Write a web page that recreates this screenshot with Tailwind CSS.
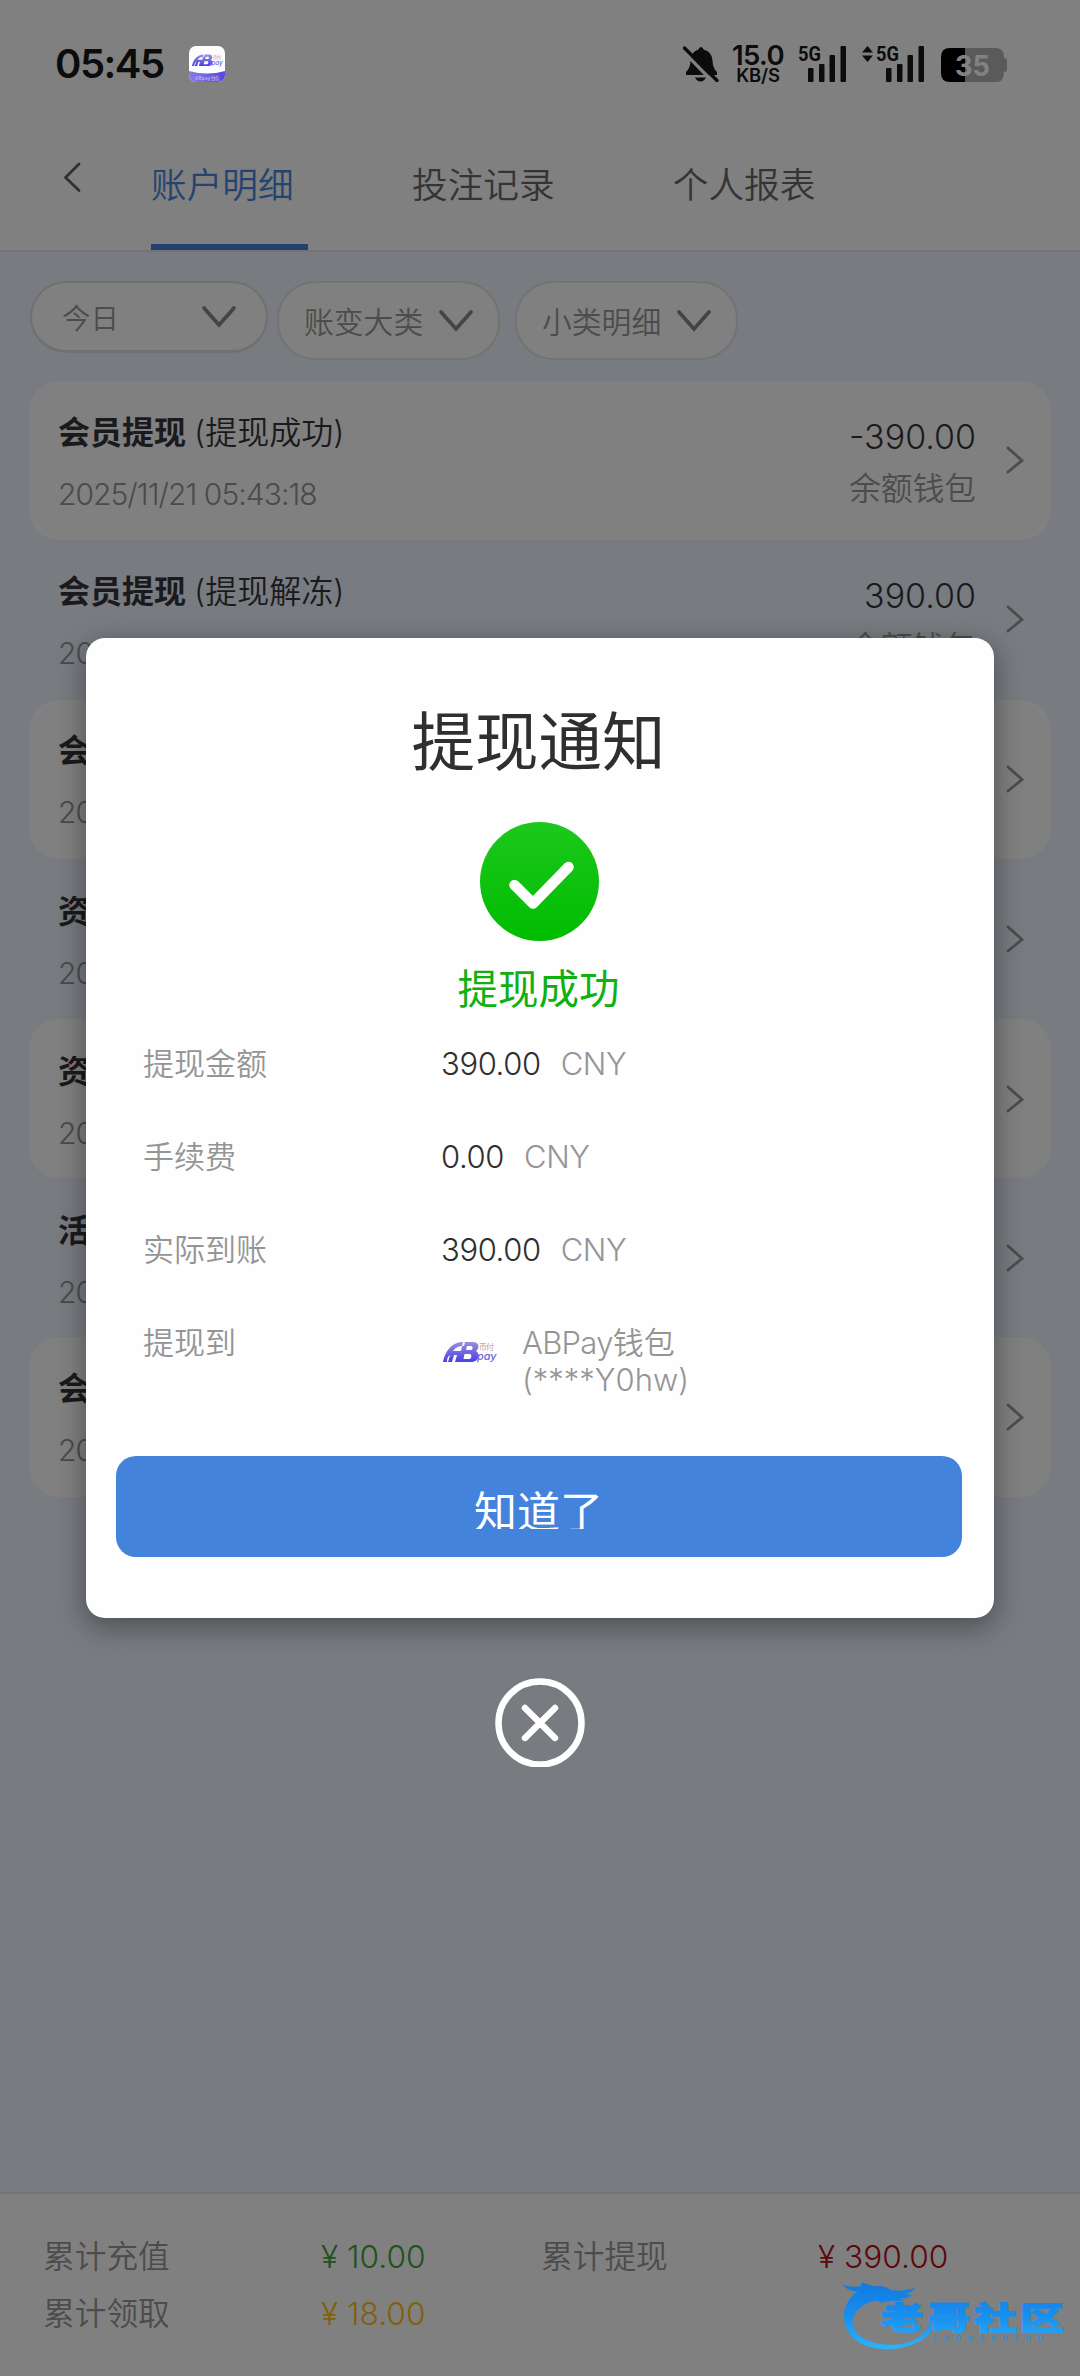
<!DOCTYPE html>
<html lang="zh-CN">
<head>
<meta charset="utf-8">
<title>账户明细</title>
<script src="https://cdn.jsdelivr.net/npm/@tailwindcss/browser@4"></script>
</head>
<body class="relative w-[1080px] h-[2376px] overflow-hidden bg-[#787b80] font-['Inter','Noto_Sans_CJK_SC',sans-serif] text-[#1a1a1c] whitespace-nowrap">
<div class="flex h-[2376px] flex-col">
  <header class="h-[250px] shrink-0 bg-[#808080]">
    <!-- status bar -->
    <div class="flex h-[128px] items-center pl-[55px] text-[#0c0c0c]">
      <span class="w-[134px] text-[40px] leading-[40px] font-semibold tracking-[-1.5px]">05:45</span>
      <svg class="h-[36px] w-[36px]" viewBox="0 0 36 36">
        <defs>
          <linearGradient id="ab" x1="0" y1="0" x2="0" y2="1"><stop offset="0" stop-color="#9a90dc"/><stop offset="1" stop-color="#4a40e4"/></linearGradient>
          <linearGradient id="pu" x1="0" x2="1"><stop offset="0" stop-color="#8f7be0"/><stop offset="1" stop-color="#5548dc"/></linearGradient>
          <clipPath id="rc"><rect width="36" height="36" rx="7"/></clipPath>
          <symbol id="logo" viewBox="0 0 54 21">
            <path d="M0 20C2 9 9 1 18 0h4l-1 4c-6 0-9 2-11 5h8l2-9h10c6 0 7 6 3 9c4 2 3 11-4 11H12l2-7h-3l-2 7H5l2-7c-2 1-3 3-3 7zM24 4l-1 4h5c2 0 2-4 0-4zM21.500 12l-1 5h6c2 0 3-5 0-5z" fill="url(#ab)" fill-rule="evenodd"/>
            <text x="34" y="18" font-family="Inter" font-size="11" font-style="italic" font-weight="500" fill="#6a62e4" textLength="19.500" lengthAdjust="spacingAndGlyphs">pay</text>
            <text x="36" y="8" font-family="Noto Sans CJK SC" font-size="8" fill="#c88aa4" textLength="15">币付</text>
          </symbol>
        </defs>
        <g clip-path="url(#rc)"><rect width="36" height="36" fill="#fdfcff"/><path d="M0 25q18 5 36 0v11H0z" fill="url(#pu)"/></g>
        <use href="#logo" x="3" y="8" width="31" height="13"/>
        <text x="6" y="33.500" font-family="Inter" font-size="4.500" fill="#d3ccff" textLength="24">ABpay钱包</text>
      </svg>
      <svg class="ml-[458px] h-[36px] w-[36px] shrink-0" viewBox="0 0 36 36" fill="#0c0c0c">
        <path d="M18 1q2 0 2.500 2.500Q29 6 29.500 14q0 8 4.500 12v3H3v-3q4.500-4 4.500-12Q8 6 15.500 3.500Q16 1 18 1zM12 31.500h11q-2 4-5.500 4t-5.500-4z"/>
        <path d="M-1 4L31 37" stroke="#808080" stroke-width="3.500"/>
        <path d="M1.500 2L34 34.500" stroke="#0c0c0c" stroke-width="3.400" stroke-linecap="round"/>
      </svg>
      <div class="ml-[11px] w-[56px] shrink-0 text-center">
        <div class="text-[27.5px] leading-[20px] font-semibold tracking-[-0.6px]">15.0</div>
        <div class="mt-[2px] text-[18.500px] leading-[16px] font-semibold tracking-[-0.2px]">KB/S</div>
      </div>
      <svg class="ml-[12px] h-[36px] w-[49px] shrink-0 overflow-visible" viewBox="0 0 49 36" fill="#0c0c0c"><rect x="10" y="22" width="5.500" height="14" rx="1"/><rect x="21" y="18" width="5.500" height="18" rx="1"/><rect x="31.500" y="9" width="5.500" height="27" rx="1"/><rect x="42.500" width="5.500" height="36" rx="1"/><text x="0" y="14.500" font-family="Roboto" font-weight="700" font-size="21" textLength="23" lengthAdjust="spacingAndGlyphs">5G</text></svg>
      <svg class="mb-[20px] ml-[15px] h-[16px] w-[11px] shrink-0" viewBox="0 0 11 16" fill="#0c0c0c"><path d="M5.500 0L11 6.500H0zM5.500 16L11 9.500H0z"/></svg>
      <svg class="ml-[3px] h-[36px] w-[49px] shrink-0 overflow-visible" viewBox="0 0 49 36" fill="#0c0c0c"><rect x="10" y="22" width="5.500" height="14" rx="1"/><rect x="21" y="18" width="5.500" height="18" rx="1"/><rect x="31.500" y="9" width="5.500" height="27" rx="1"/><rect x="42.500" width="5.500" height="36" rx="1"/><text x="0" y="14.500" font-family="Roboto" font-weight="700" font-size="21" textLength="23" lengthAdjust="spacingAndGlyphs">5G</text></svg>
      <svg class="ml-[16px] mt-[2px] h-[34px] w-[67px] shrink-0" viewBox="0 0 67 34">
        <path d="M24 0h31q8 0 8 10q3 0 3 3v8q0 3-3 3q0 10-8 10H24z" fill="#5a5a5a"/>
        <path d="M24 0v34H9q-9 0-9-9V9q0-9 9-9z" fill="#000"/>
        <text x="14" y="27.500" font-family="Inter" font-weight="700" font-size="29" fill="#828282" textLength="35" lengthAdjust="spacingAndGlyphs">35</text>
      </svg>
    </div>
    <!-- tabs -->
    <nav class="flex h-[122px] text-[35.7px] leading-[40px] text-[#343434]">
      <svg class="ml-[62px] mt-[33px] h-[32px] w-[20px]" viewBox="0 0 20 32" fill="none" stroke="#303030" stroke-width="2.800" stroke-linecap="round" stroke-linejoin="round"><path d="M17 3L3.500 16.500L17 29.500"/></svg>
      <div class="ml-[69px] w-[157px] border-b-[6px] border-[#22416f] pt-[37px] font-[350] text-[#24446f]">账户明细</div>
      <div class="ml-[104px] pt-[37px] font-[350]">投注记录</div>
      <div class="ml-[118px] pt-[37px] font-[350]">个人报表</div>
    </nav>
  </header>
  <main class="flex-1 border-t-[2px] border-[#737378]">
    <div class="flex h-[129px] items-start pl-[30px] pt-[29px] text-[29.8px] leading-[36px] font-[350] text-[#4c4c4c]">
      <div class="flex h-[72px] w-[238px] justify-between rounded-[36px] border-2 border-b-[3px] border-[#707070] bg-[#808080] pl-[30px] pr-[29px] pt-[18px]">
        <span class="text-[28.5px]">今日</span>
        <svg class="mt-[4px] h-[24px] w-[36px]" viewBox="0 0 36 24" fill="none" stroke="#444" stroke-width="3.700" stroke-linecap="round"><path d="M3 3L18 20L33 3"/></svg>
      </div>
      <div class="ml-[9px] flex h-[79px] w-[223px] justify-between rounded-[38px] border-2 border-[#737373] bg-[#808080] pl-[25px] pr-[24px] pt-[21px]">
        <span>账变大类</span>
        <svg class="mt-[5px] h-[24px] w-[36px]" viewBox="0 0 36 24" fill="none" stroke="#444" stroke-width="3.700" stroke-linecap="round"><path d="M3 3L18 20L33 3"/></svg>
      </div>
      <div class="ml-[15px] flex h-[79px] w-[223px] justify-between rounded-[38px] border-2 border-[#737373] bg-[#808080] pl-[25px] pr-[24px] pt-[21px]">
        <span>小类明细</span>
        <svg class="mt-[5px] h-[24px] w-[36px]" viewBox="0 0 36 24" fill="none" stroke="#444" stroke-width="3.700" stroke-linecap="round"><path d="M3 3L18 20L33 3"/></svg>
      </div>
    </div>
    <section class="mx-[29px] grid auto-rows-[159.4px] text-[32px] leading-[40px]">
      <article class="flex rounded-[30px] bg-[#808080] pl-[29px] pr-[27px]">
        <div class="pt-[32px]"><div class="font-[350]"><b class="font-bold">会员提现</b> <span class="-ml-px">(提现成功)</span></div><div class="mt-[21px] text-[30px] font-light tracking-[-0.95px] text-[#4a4a4a]">2025/11/21 05:43:18</div></div>
        <div class="ml-auto pt-[36px] text-right font-[350]"><div class="text-[34px]">-390.00</div><div class="mt-[12px] text-[31.700px] text-[#4c4c4c]">余额钱包</div></div>
        <svg class="ml-[28px] mt-[65px] h-[28px] w-[20px]" viewBox="0 0 20 28" fill="none" stroke="#4c4c4c" stroke-width="2.800" stroke-linecap="round"><path d="M4 2L18 14.500L4 26"/></svg>
      </article>
      <article class="flex pl-[29px] pr-[27px]">
        <div class="pt-[32px]"><div class="font-[350]"><b class="font-bold">会员提现</b> <span class="-ml-px">(提现解冻)</span></div><div class="mt-[21px] text-[30px] font-light tracking-[-0.95px] text-[#4a4a4a]">20</div></div>
        <div class="ml-auto pt-[36px] text-right font-[350]"><div class="text-[34px]">390.00</div><div class="mt-[12px] text-[31.700px] text-[#4c4c4c]">余额钱包</div></div>
        <svg class="ml-[28px] mt-[65px] h-[28px] w-[20px]" viewBox="0 0 20 28" fill="none" stroke="#4c4c4c" stroke-width="2.800" stroke-linecap="round"><path d="M4 2L18 14.500L4 26"/></svg>
      </article>
      <article class="flex justify-between rounded-[30px] bg-[#808080] pl-[29px] pr-[27px]">
        <div class="pt-[31px]"><b>会</b><div class="mt-[21px] text-[30px] font-light tracking-[-0.95px] text-[#4a4a4a]">20</div></div>
        <svg class="mt-[65px] h-[28px] w-[20px]" viewBox="0 0 20 28" fill="none" stroke="#4c4c4c" stroke-width="2.800" stroke-linecap="round"><path d="M4 2L18 14.500L4 26"/></svg>
      </article>
      <article class="flex justify-between pl-[29px] pr-[27px]">
        <div class="pt-[33px]"><b>资</b><div class="mt-[21px] text-[30px] font-light tracking-[-0.95px] text-[#4a4a4a]">20</div></div>
        <svg class="mt-[66px] h-[28px] w-[20px]" viewBox="0 0 20 28" fill="none" stroke="#4c4c4c" stroke-width="2.800" stroke-linecap="round"><path d="M4 2L18 14.500L4 26"/></svg>
      </article>
      <article class="flex justify-between rounded-[30px] bg-[#808080] pl-[29px] pr-[27px]">
        <div class="pt-[33px]"><b>资</b><div class="mt-[21px] text-[30px] font-light tracking-[-0.95px] text-[#4a4a4a]">20</div></div>
        <svg class="mt-[66px] h-[28px] w-[20px]" viewBox="0 0 20 28" fill="none" stroke="#4c4c4c" stroke-width="2.800" stroke-linecap="round"><path d="M4 2L18 14.500L4 26"/></svg>
      </article>
      <article class="flex justify-between pl-[29px] pr-[27px]">
        <div class="pt-[33px]"><b>活</b><div class="mt-[21px] text-[30px] font-light tracking-[-0.95px] text-[#4a4a4a]">20</div></div>
        <svg class="mt-[66px] h-[28px] w-[20px]" viewBox="0 0 20 28" fill="none" stroke="#4c4c4c" stroke-width="2.800" stroke-linecap="round"><path d="M4 2L18 14.500L4 26"/></svg>
      </article>
      <article class="flex justify-between rounded-[30px] bg-[#808080] pl-[29px] pr-[27px]">
        <div class="pt-[32px]"><b>会</b><div class="mt-[21px] text-[30px] font-light tracking-[-0.95px] text-[#4a4a4a]">20</div></div>
        <svg class="mt-[66px] h-[28px] w-[20px]" viewBox="0 0 20 28" fill="none" stroke="#4c4c4c" stroke-width="2.800" stroke-linecap="round"><path d="M4 2L18 14.500L4 26"/></svg>
      </article>
    </section>
  </main>
  <footer class="grid h-[184px] shrink-0 grid-cols-[278px_220px_277px_1fr] content-start gap-y-[17px] border-t-2 border-[#757575] bg-[#808080] pl-[43px] pt-[43px] text-[31.7px] leading-[40px] font-[350] text-[#4c4c4c]">
    <span>累计充值</span><span class="text-[#20521c]">¥ 10.00</span><span>累计提现</span><span class="text-[#5c080a]">¥ 390.00</span>
    <span>累计领取</span><span class="text-[#80600c]">¥ 18.00</span>
  </footer>
</div>

<!-- notice dialog -->
<div class="absolute inset-x-0 top-[638px] flex flex-col items-center">
  <div class="flex h-[980px] w-[908px] flex-col items-center rounded-[19px] bg-[#fefefe] px-[30px] text-[#2f2f2f] shadow-[0_8px_28px_2px_rgba(0,0,0,0.35)]">
    <h1 class="mt-[68px] pr-[3px] text-[63.500px] leading-[72px]">提现通知</h1>
    <svg class="mt-[44px] h-[120px] w-[120px]" viewBox="0 0 120 120">
      <defs><linearGradient id="g" x1="0" y1="0" x2="0" y2="1"><stop offset="0" stop-color="#1cc81c"/><stop offset="1" stop-color="#00bc00"/></linearGradient></defs>
      <circle cx="59.500" cy="59.500" r="59.500" fill="url(#g)"/>
      <path d="M34.500 63L53 81.500L88.500 45" fill="none" stroke="#fff" stroke-width="10.500" stroke-linecap="round" stroke-linejoin="round"/>
    </svg>
    <div class="mt-[24px] pr-[3px] text-[40.5px] leading-[48px] text-[#10b010]">提现成功</div>
    <div class="mt-[30px] grid w-full grid-cols-[298px_1fr] gap-y-[53px] pl-[27px] text-[31px] leading-[40px] font-[350] text-[#959595]">
      <span>提现金额</span><span class="tracking-[-0.4px]"><span class="text-[#2f2f2f]">390.00</span><span class="ml-[20px]">CNY</span></span>
      <span>手续费</span><span class="tracking-[-0.4px]"><span class="text-[#2f2f2f]">0.00</span><span class="ml-[20px]">CNY</span></span>
      <span>实际到账</span><span class="tracking-[-0.4px]"><span class="text-[#2f2f2f]">390.00</span><span class="ml-[20px]">CNY</span></span>
      <span>提现到</span>
      <div class="flex h-[76px]">
        <svg class="ml-[2px] mt-[19px] h-[21px] w-[54px]" viewBox="0 0 54 21"><use href="#logo" width="54" height="21"/></svg>
        <div class="ml-[25px] mt-[1px] leading-[37px]"><span class="tracking-[-0.7px]">ABPay</span>钱包<br>(****Y0hw)</div>
      </div>
    </div>
    <button class="mt-[57px] h-[101px] w-[846px] self-start rounded-[20px] bg-[#4383dc] text-[43px] text-white">
      <span class="mx-auto block h-[44px] w-[130px] overflow-hidden text-left leading-[54px]">知道了</span>
    </button>
  </div>
  <svg class="mt-[60px] h-[89px] w-[90px]" viewBox="0 0 90 89" fill="none" stroke="#fff"><circle cx="45" cy="45" r="41.500" stroke-width="6.500"/><path d="M30 30L60 60M60 30L30 60" stroke-width="6.500" stroke-linecap="round"/></svg>
</div>

<!-- community watermark -->
<svg class="absolute left-[840px] top-[2280px] h-[72px] w-[230px]" viewBox="0 0 230 72">
  <defs><linearGradient id="w" gradientUnits="userSpaceOnUse" x1="0" y1="0" x2="0" y2="70"><stop offset="0" stop-color="#1478dc"/><stop offset=".5" stop-color="#168ef0"/><stop offset="1" stop-color="#2fb4f8"/></linearGradient></defs>
  <g fill="url(#w)">
    <path d="M3 5q10 3 18 1l1-4q9 5 20 4q6 2 9 4q10 2 24-2q-3 5-10 6l7 1q-4 4-12 3l4 3q-14-1-22 2q-5-3-8-2C17 25 7 39 16 52C26 65 54 68 72 61Q87 54 91 40Q97 52 80 61C57 74 22 72 9 53C-1 37 5 20 18 11Q8 12 3 5z"/>
    <g font-family="Noto Sans CJK SC" font-weight="900" font-size="31" stroke="url(#w)" stroke-width="1.300">
      <text x="41" y="49" textLength="42" lengthAdjust="spacingAndGlyphs">老</text>
      <text x="88" y="49" textLength="42" lengthAdjust="spacingAndGlyphs">哥</text>
      <text x="134" y="49" textLength="43" lengthAdjust="spacingAndGlyphs">社</text>
      <text x="180" y="49" textLength="44" lengthAdjust="spacingAndGlyphs">区</text>
    </g>
    <text x="93" y="61" font-family="Inter" font-weight="600" font-size="7" fill="#2d8fd5" textLength="110">LAOGESHEQU</text>
  </g>
</svg>
</body>
</html>
